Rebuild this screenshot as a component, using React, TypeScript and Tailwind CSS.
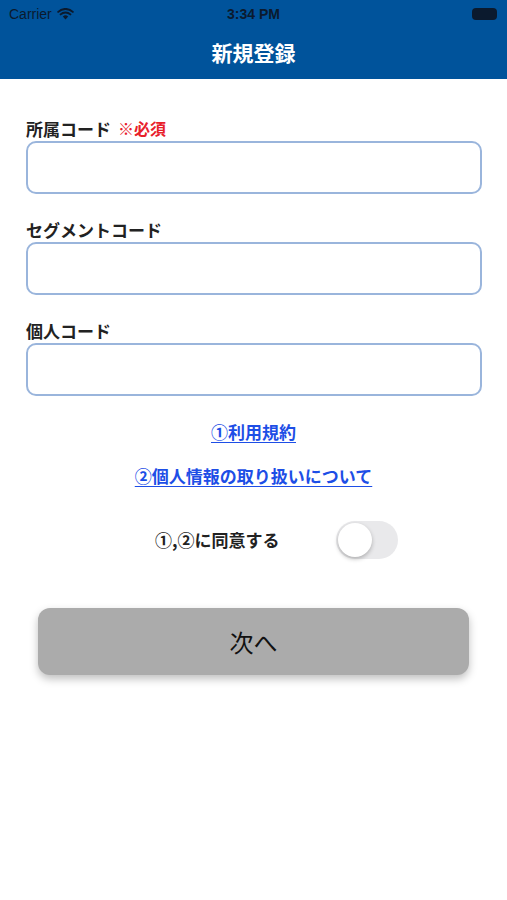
import React from "react";

const font = { fontFamily: '"Noto Sans CJK JP", "Noto Sans", "Liberation Sans", sans-serif' };

function Field({ label, required, first }: { label: string; required?: boolean; first?: boolean }) {
  return (
    <div className={first ? "flex flex-col" : "flex flex-col mt-[25px]"}>
      <div className="h-[20px] flex items-center gap-[7px] text-[17px] font-bold text-[#222] leading-none">
        <span>{label}</span>
        {required && <span className="text-[#e8202a] text-[16px]">※必須</span>}
      </div>
      <div className="mt-[3px] h-[53px] rounded-[10px] border-2 border-[#9ab5dc] bg-white" />
    </div>
  );
}

export default function App() {
  return (
    <div className="w-[507px] h-[900px] bg-white" style={font}>
      <div className="bg-[#00539b] h-[79px] flex flex-col">
        <div className="h-[28px] flex items-center justify-between px-[9px] text-[#0b1a2e] text-[14px]" style={{ fontFamily: '"Liberation Sans", sans-serif' }}>
          <div className="flex items-center gap-[5px] w-[120px]">
            <span>Carrier</span>
            <svg width="17" height="12" viewBox="0 0 17 12">
              <path d="M8.5 11.5 L5.8 8.6 A3.8 3.8 0 0 1 11.2 8.6 Z" fill="#0b1a2e" />
              <path d="M3.6 6.4 A7 7 0 0 1 13.4 6.4" stroke="#0b1a2e" strokeWidth="2" fill="none" strokeLinecap="round" />
              <path d="M1.2 3.9 A10.5 10.5 0 0 1 15.8 3.9" stroke="#0b1a2e" strokeWidth="2" fill="none" strokeLinecap="round" />
            </svg>
          </div>
          <span className="font-bold text-[14px]">3:34 PM</span>
          <div className="w-[120px] flex justify-end pr-[1px]">
            <div className="w-[25px] h-[12px] rounded-[4px] bg-[#0b1a2e]" />
          </div>
        </div>
        <div className="flex-1 flex items-center justify-center pb-[2px] text-white text-[21px] font-bold">新規登録</div>
      </div>

      <div className="pl-[26px] pr-[25px] pt-[39px] flex flex-col">
        <Field label="所属コード" required first />
        <Field label="セグメントコード" />
        <Field label="個人コード" />
      </div>

      <div className="flex flex-col items-center mt-[24px] text-[17px] font-bold text-[#1d4ee6]">
        <span className="underline underline-offset-[3px] leading-[24px]">①利用規約</span>
        <span className="underline underline-offset-[3px] leading-[24px] mt-[20px]">②個人情報の取り扱いについて</span>
      </div>

      <div className="flex items-center mt-[33px] h-[38px]">
        <span className="ml-[155px] w-[181px] text-[17px] font-bold text-[#222]">①,②に同意する</span>
        <div className="w-[62px] h-[38px] rounded-full bg-[#e9e9eb] p-[2px] flex items-center">
          <div className="w-[34px] h-[34px] rounded-full bg-white shadow-[0_2px_4px_rgba(0,0,0,0.25)]" />
        </div>
      </div>

      <div className="px-[38px] mt-[49px]">
        <div className="h-[67px] rounded-[12px] bg-[#ababab] flex items-center justify-center text-[24px] font-normal text-[#111] shadow-[0_4px_8px_rgba(0,0,0,0.25)]">
          次へ
        </div>
      </div>
    </div>
  );
}
